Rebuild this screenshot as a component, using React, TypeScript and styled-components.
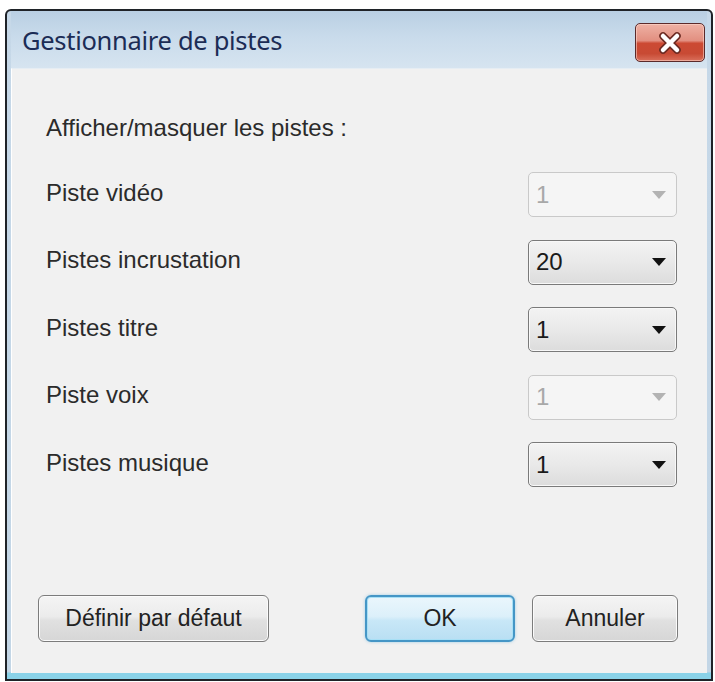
import React, { useState } from "react";
import styled, { createGlobalStyle, css } from "styled-components";

const GlobalStyle = createGlobalStyle`
  html, body {
    margin: 0;
    padding: 0;
    background: #ffffff;
  }
  * {
    box-sizing: border-box;
  }
`;

const Page = styled.div`
  width: 715px;
  height: 682px;
  padding: 9px 2px 0 5px;
  background: #ffffff;
  overflow: hidden;
`;

const Window = styled.div`
  width: 708px;
  height: 672px;
  display: flex;
  flex-direction: column;
  border: 2px solid #1f2328;
  border-radius: 6px 6px 0 0;
  padding: 0 4px 6px;
  background: linear-gradient(
    to bottom,
    #c6d8e8 0%,
    #c3d6e6 calc(100% - 7px),
    #8ad2e8 calc(100% - 6px),
    #8ad2e8 100%
  );
`;

const TitleBar = styled.div`
  height: 57px;
  flex: 0 0 57px;
  display: flex;
  align-items: flex-start;
  justify-content: space-between;
  padding: 0 2px 0 11px;
  background: linear-gradient(to bottom, #b9cfe3 0%, #c9dbeb 45%, #d6e4f0 100%);
`;

const Title = styled.h1`
  margin: 14px 0 0;
  font-family: "Noto Sans", "Open Sans", sans-serif;
  font-weight: 400;
  font-size: 25.5px;
  line-height: 30px;
  color: #1c2c55;
  letter-spacing: -0.3px;
`;

const CloseButton = styled.button`
  margin-top: 12px;
  width: 70px;
  height: 39px;
  padding: 0;
  display: flex;
  align-items: center;
  justify-content: center;
  border: 1px solid #5b2a2a;
  border-radius: 5px;
  background: linear-gradient(
    to bottom,
    #eeb1a4 0%,
    #e28f80 45%,
    #cc4a33 52%,
    #c84a34 80%,
    #d9705c 100%
  );
  box-shadow: inset 0 0 0 1px rgba(255, 220, 210, 0.55);
  cursor: pointer;
`;

const Content = styled.div`
  flex: 1;
  display: flex;
  flex-direction: column;
  padding: 45px 29px 31px 26px;
  background: #f1f1f1;
  border-left: 1px solid #ffffff;
  border-top: 1px solid #e6edf3;
`;

const Heading = styled.p`
  margin: 0 0 30px 8px;
  font-family: "Liberation Sans", Arial, sans-serif;
  font-size: 24px;
  line-height: 28px;
  color: #2b2b2b;
`;

const Rows = styled.div`
  display: flex;
  flex-direction: column;
  gap: 22.5px;
  padding: 0 1px 0 8px;
`;

const Row = styled.div`
  display: flex;
  align-items: center;
  justify-content: space-between;
  height: 45px;
`;

const Label = styled.span`
  font-family: "Liberation Sans", Arial, sans-serif;
  font-size: 24px;
  line-height: 28px;
  color: #2b2b2b;
  margin-top: -4px;
`;

const Select = styled.div<{ $disabled?: boolean }>`
  width: 149px;
  height: 45px;
  display: flex;
  align-items: center;
  justify-content: space-between;
  padding: 0 10px 0 7px;
  border-radius: 5px;
  font-family: "Liberation Sans", Arial, sans-serif;
  font-size: 24px;
  ${({ $disabled }) =>
    $disabled
      ? css`
          border: 1px solid #c9c9c9;
          background: #f5f5f5;
          color: #a8a8a8;
        `
      : css`
          border: 1.5px solid #7a7a7a;
          background: linear-gradient(to bottom, #f3f3f3 0%, #e9e9e9 50%, #dcdcdc 100%);
          box-shadow: inset 0 0 0 1px #f8f8f8;
          color: #1a1a1a;
          cursor: pointer;
        `}
`;

const Arrow = styled.span<{ $disabled?: boolean }>`
  width: 0;
  height: 0;
  border-left: 7px solid transparent;
  border-right: 7px solid transparent;
  border-top: 8px solid ${({ $disabled }) => ($disabled ? "#b3b3b3" : "#111111")};
`;

const ButtonRow = styled.div`
  margin-top: auto;
  display: flex;
  align-items: center;
  gap: 17px;
`;

const Button = styled.button<{ $width: number; $primary?: boolean }>`
  width: ${({ $width }) => $width}px;
  height: 47px;
  padding: 0;
  border-radius: 6px;
  font-family: "Liberation Sans", Arial, sans-serif;
  font-size: 23px;
  color: #222222;
  cursor: pointer;
  ${({ $primary }) =>
    $primary
      ? css`
          border: 2px solid #4596c6;
          background: linear-gradient(to bottom, #eaf6fc 0%, #dcf0fa 45%, #c8e7f7 55%, #b9dff3 100%);
          box-shadow: 0 0 3px rgba(70, 170, 220, 0.5), inset 0 0 0 1px #a8e0f6;
        `
      : css`
          border: 1.5px solid #7c7c7c;
          background: linear-gradient(to bottom, #f4f4f4 0%, #ececec 45%, #e0e0e0 55%, #d6d6d6 100%);
          box-shadow: inset 0 0 0 1px #fbfbfb;
        `}
`;

const Spacer = styled.div`
  flex: 1;
`;

type Track = { label: string; value: string; disabled?: boolean };

const tracks: Track[] = [
  { label: "Piste vidéo", value: "1", disabled: true },
  { label: "Pistes incrustation", value: "20" },
  { label: "Pistes titre", value: "1" },
  { label: "Piste voix", value: "1", disabled: true },
  { label: "Pistes musique", value: "1" },
];

const CloseIcon = () => (
  <svg width="26" height="22" viewBox="0 0 26 22">
    <path d="M6 4 L20 18 M20 4 L6 18" stroke="#6b2a22" strokeWidth="7.5" strokeLinecap="round" />
    <path d="M6 4 L20 18 M20 4 L6 18" stroke="#ffffff" strokeWidth="4.5" strokeLinecap="round" />
  </svg>
);

const App = () => {
  const [values] = useState(tracks);

  return (
    <Page>
      <GlobalStyle />
      <Window>
        <TitleBar>
          <Title>Gestionnaire de pistes</Title>
          <CloseButton aria-label="Fermer">
            <CloseIcon />
          </CloseButton>
        </TitleBar>
        <Content>
          <Heading>Afficher/masquer les pistes :</Heading>
          <Rows>
            {values.map((t) => (
              <Row key={t.label}>
                <Label>{t.label}</Label>
                <Select $disabled={t.disabled}>
                  <span>{t.value}</span>
                  <Arrow $disabled={t.disabled} />
                </Select>
              </Row>
            ))}
          </Rows>
          <ButtonRow>
            <Button $width={231}>Définir par défaut</Button>
            <Spacer />
            <Button $width={150} $primary>
              OK
            </Button>
            <Button $width={146}>Annuler</Button>
          </ButtonRow>
        </Content>
      </Window>
    </Page>
  );
};

export default App;
